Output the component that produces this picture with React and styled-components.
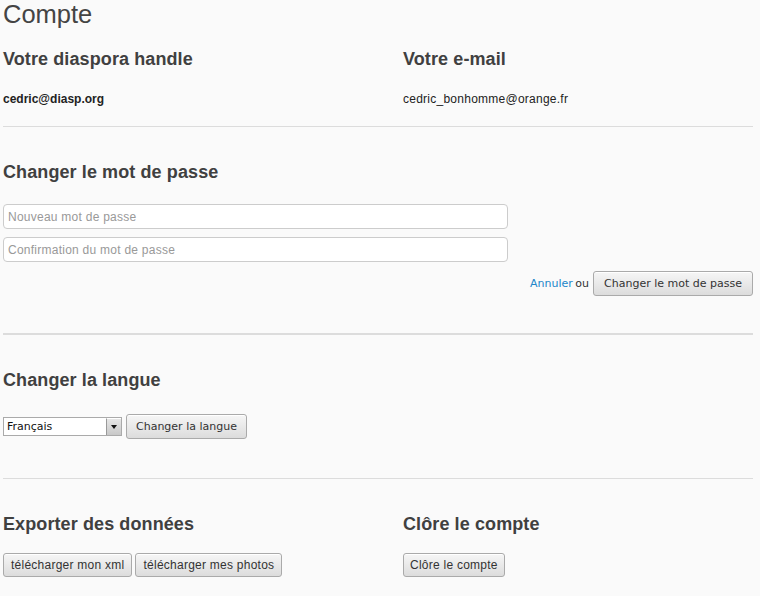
import React from "react";
import styled, { createGlobalStyle } from "styled-components";

const Global = createGlobalStyle`
  html, body { margin: 0; padding: 0; background: #fafafa; }
  body { font-family: "Liberation Sans", Arial, sans-serif; color: #333; }
`;

const Page = styled.div`
  width: 750px;
  padding: 0 7px 20px 3px;
`;

const Title = styled.h1`
  margin: 0;
  font-size: 25.5px;
  line-height: 28px;
  font-weight: normal;
  color: #444;
`;

const Columns = styled.div`
  display: grid;
  grid-template-columns: 400px 1fr;
  margin-top: ${(p) => p.$mt || 0}px;
`;

const Heading = styled.h3`
  margin: ${(p) => p.$mt || 0}px 0 0;
  font-size: 18px;
  line-height: 20px;
  font-weight: bold;
  color: #404040;
  letter-spacing: 0.1px;
`;

const Value = styled.div`
  margin-top: 22px;
  font-size: 12px;
  line-height: 16px;
  color: #222;
  font-weight: ${(p) => (p.$bold ? "bold" : "normal")};
  letter-spacing: ${(p) => (p.$bold ? 0 : 0.25)}px;
`;

const Rule = styled.hr`
  margin: ${(p) => p.$mt}px 0 0;
  border: 0;
  height: ${(p) => p.$h || 1}px;
  background: #dcdcdc;
`;

const Fields = styled.div`
  margin-top: 22px;
  display: flex;
  flex-direction: column;
  gap: 8px;
`;

const Input = styled.input`
  box-sizing: border-box;
  width: 505px;
  height: 25px;
  border: 1px solid #ccc;
  border-radius: 4px;
  background: #fff;
  padding: 0 4px;
  font-family: "Liberation Sans", Arial, sans-serif;
  font-size: 12px;
  letter-spacing: 0.25px;
  color: #333;
  outline: none;
  &::placeholder { color: #999; }
`;

const Actions = styled.div`
  margin-top: 9px;
  display: flex;
  justify-content: flex-end;
  align-items: center;
  gap: 4px;
  font-family: "DejaVu Sans", sans-serif;
  font-size: 11px;
  color: #333;
`;

const Link = styled.a`
  color: #2286c9;
  text-decoration: none;
  margin-right: -1px;
`;

const Button = styled.button`
  box-sizing: border-box;
  height: ${(p) => p.$h || 25}px;
  padding: 0 ${(p) => p.$px || 10}px;
  border: 1px solid #aaa;
  border-radius: 3px;
  background: linear-gradient(#f6f6f6, #dcdcdc);
  box-shadow: inset 0 1px 0 #fff;
  color: #333;
  font-family: ${(p) =>
    p.$ubuntu ? `"DejaVu Sans", sans-serif` : `"Liberation Sans", Arial, sans-serif`};
  font-size: ${(p) => (p.$ubuntu ? 11 : 12)}px;
  letter-spacing: ${(p) => (p.$ubuntu ? 0 : 0.25)}px;
  cursor: pointer;
`;

const LangRow = styled.div`
  margin-top: 24px;
  display: flex;
  align-items: center;
  gap: 4px;
`;

const Select = styled.div`
  box-sizing: border-box;
  width: 119px;
  height: 19px;
  border: 1px solid #aaa;
  background: #fff;
  display: flex;
  align-items: center;
  justify-content: space-between;
  padding-left: 3px;
  font-family: "DejaVu Sans", sans-serif;
  font-size: 11px;
  color: #111;
`;

const Arrow = styled.span`
  box-sizing: border-box;
  width: 15px;
  height: 17px;
  background: linear-gradient(#e6e6e6, #c8c8c8);
  border-left: 1px solid #999;
  border-top: 1px solid #fff;
  display: flex;
  align-items: center;
  justify-content: center;
  &::after {
    content: "";
    border-left: 3px solid transparent;
    border-right: 3px solid transparent;
    border-top: 4px solid #111;
  }
`;

const ButtonRow = styled.div`
  margin-top: 19px;
  display: flex;
  gap: 3px;
`;

export default function App() {
  return (
    <>
      <Global />
      <Page>
        <Title>Compte</Title>
        <Columns $mt={21}>
          <div>
            <Heading>Votre diaspora handle</Heading>
            <Value $bold>cedric@diasp.org</Value>
          </div>
          <div>
            <Heading>Votre e-mail</Heading>
            <Value>cedric_bonhomme@orange.fr</Value>
          </div>
        </Columns>
        <Rule $mt={19} />

        <Heading $mt={35}>Changer le mot de passe</Heading>
        <Fields>
          <Input type="password" placeholder="Nouveau mot de passe" />
          <Input type="password" placeholder="Confirmation du mot de passe" />
        </Fields>
        <Actions>
          <span>
            <Link href="#">Annuler</Link> ou
          </span>
          <Button $ubuntu>Changer le mot de passe</Button>
        </Actions>
        <Rule $mt={37} $h={2} />

        <Heading $mt={35}>Changer la langue</Heading>
        <LangRow>
          <Select>
            <span>Français</span>
            <Arrow />
          </Select>
          <Button $ubuntu $px={9}>Changer la langue</Button>
        </LangRow>
        <Rule $mt={39} />

        <Columns $mt={35}>
          <div>
            <Heading>Exporter des données</Heading>
            <ButtonRow>
              <Button $h={24} $px={7}>télécharger mon xml</Button>
              <Button $h={24} $px={7}>télécharger mes photos</Button>
            </ButtonRow>
          </div>
          <div>
            <Heading>Clôre le compte</Heading>
            <ButtonRow>
              <Button $h={24} $px={6}>Clôre le compte</Button>
            </ButtonRow>
          </div>
        </Columns>
      </Page>
    </>
  );
}
